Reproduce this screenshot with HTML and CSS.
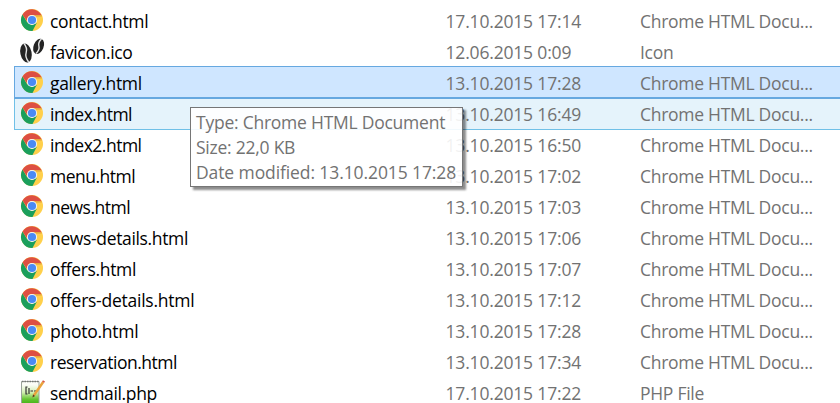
FILE: index.html
```
<!DOCTYPE html>
<html lang="en">
<head>
<meta charset="utf-8">
<title>Files</title>
<link rel="stylesheet" href="styles.css">
</head>
<body>
<svg class="defs" aria-hidden="true">
  <symbol id="chrome" viewBox="0 0 24 24">
    <circle cx="12" cy="12" r="11" fill="#ffd04b"/>
    <path d="M2.500 6.500A11 11 0 0 0 12.500 23l4.300-8.300-4.800 2.300-5-3z" fill="#1b9f5c"/>
    <path d="M2.500 6.500A11 11 0 0 1 21.500 7H12a5 5 0 0 0-4.800 6.400z" fill="#dd4f43"/>
    <path d="M12 7h9.500l.5 1.400-9 .3z" fill="#e9a63c"/>
    <circle cx="12" cy="12" r="5.100" fill="#f4f4f4"/>
    <circle cx="12" cy="12" r="4.100" fill="#4a8af5"/>
  </symbol>
</svg>
<main class="list">
  <div class="row"><svg class="icon"><use href="#chrome"/></svg><span class="name">contact.html</span><span class="date">17.10.2015 17:14</span><span class="type">Chrome HTML Docu...</span></div>
  <div class="row"><svg class="icon beans" viewBox="0 0 24 24">
    <g fill="#242424"><ellipse cx="6" cy="14" rx="5.600" ry="9.600" transform="rotate(-12 6 14)"/><ellipse cx="18.600" cy="7.400" rx="5" ry="8" transform="rotate(22 18.600 7.400)"/></g>
    <path d="M4 4.500q3.600 4.500 2.200 9t2.400 9.500M21.500 0q-3.600 3.400-2.600 7t-2.800 7.500" fill="none" stroke="#e4e4e4" stroke-width="1.400"/>
  </svg><span class="name">favicon.ico</span><span class="date">12.06.2015 0:09</span><span class="type">Icon</span></div>
  <div class="row selected"><svg class="icon"><use href="#chrome"/></svg><span class="name">gallery.html</span><span class="date">13.10.2015 17:28</span><span class="type">Chrome HTML Docu...</span></div>
  <div class="row hover"><svg class="icon"><use href="#chrome"/></svg><span class="name tight">index.html</span><span class="date">13.10.2015 16:49</span><span class="type">Chrome HTML Docu...</span></div>
  <div class="row"><svg class="icon"><use href="#chrome"/></svg><span class="name tight">index2.html</span><span class="date">13.10.2015 16:50</span><span class="type">Chrome HTML Docu...</span></div>
  <div class="row"><svg class="icon"><use href="#chrome"/></svg><span class="name tight">menu.html</span><span class="date">13.10.2015 17:02</span><span class="type">Chrome HTML Docu...</span></div>
  <div class="row"><svg class="icon"><use href="#chrome"/></svg><span class="name tight">news.html</span><span class="date">13.10.2015 17:03</span><span class="type">Chrome HTML Docu...</span></div>
  <div class="row"><svg class="icon"><use href="#chrome"/></svg><span class="name">news-details.html</span><span class="date">13.10.2015 17:06</span><span class="type">Chrome HTML Docu...</span></div>
  <div class="row"><svg class="icon"><use href="#chrome"/></svg><span class="name">offers.html</span><span class="date">13.10.2015 17:07</span><span class="type">Chrome HTML Docu...</span></div>
  <div class="row"><svg class="icon"><use href="#chrome"/></svg><span class="name loose">offers-details.html</span><span class="date">13.10.2015 17:12</span><span class="type">Chrome HTML Docu...</span></div>
  <div class="row"><svg class="icon"><use href="#chrome"/></svg><span class="name loose">photo.html</span><span class="date">13.10.2015 17:28</span><span class="type">Chrome HTML Docu...</span></div>
  <div class="row"><svg class="icon"><use href="#chrome"/></svg><span class="name tight">reservation.html</span><span class="date">13.10.2015 17:34</span><span class="type">Chrome HTML Docu...</span></div>
  <div class="row"><svg class="icon" viewBox="0 0 24 24">
    <defs><linearGradient id="page" x1="0" y1="0" x2="0" y2="1"><stop offset=".15" stop-color="#fbfdf7"/><stop offset=".5" stop-color="#d0edb0"/><stop offset=".8" stop-color="#66c532"/><stop offset="1" stop-color="#48b51b"/></linearGradient></defs>
    <path d="M1.500 1.500H19V23.500H1.500z" fill="url(#page)" stroke="#9aa39a"/>
    <path d="M2 1.500h17" stroke="#777" stroke-width="1.500" stroke-dasharray="1.500 1"/>
    <path d="M7.500 7H6v7h1.500M9 8v6M10.500 11h2.500M14 11h2" fill="none" stroke="#333" stroke-width="1.200"/>
    <path d="M22 1.500l2 1.500-9 13-2.500 1.500.5-3z" fill="#e9a33b"/><path d="M22 1.500l1-1.300 2 1.300-1 1.500z" fill="#d9573f"/><path d="M13 14.500l-.5 3 2.500-1.500z" fill="#4d3a25"/>
  </svg><span class="name">sendmail.php</span><span class="date">17.10.2015 17:22</span><span class="type">PHP File</span></div>
</main>
<aside class="tooltip"><div class="kind">Type: Chrome HTML Document</div><div class="size">Size: 22,0 KB</div><div class="modified">Date modified: 13.10.2015 17:28</div></aside>
</body>
</html>
```

FILE: styles.css
```
* { box-sizing: border-box; }
body {
  margin: 0;
  height: 403px;
  overflow: hidden;
  position: relative;
  background: #fff;
  color: #727272;
  font: 400 17.5px/20px "Open Sans", "Noto Sans", sans-serif;
  white-space: nowrap;
}
.defs { position: absolute; width: 0; height: 0; }
.list { padding: 5px 0 0 14px; }
.row {
  height: 31px;
  display: grid;
  grid-template-columns: 36px 396px 194px 1fr;
  align-items: center;
  padding-top: 1px;
}
.icon { width: 24px; height: 24px; margin-left: 6px; margin-top: -2px; display: block; overflow: visible; }
.name { color: #000; letter-spacing: -.35px; }
.name.tight { letter-spacing: -.5px; }
.name.loose { letter-spacing: -.25px; }
.date { letter-spacing: -.18px; margin-left: -.5px; }
.type { letter-spacing: -.28px; }
.selected, .hover { grid-template-columns: 35px 396px 194px 1fr; }
.selected .icon, .hover .icon { margin-left: 5px; }
.selected {
  background: #cfe6ff;
  border: solid #66a8e0;
  border-width: 1px 0 2px 1px;
  height: 33px;
  margin-top: -1px;
  margin-bottom: -1px;
}
.hover {
  background: #e5f3fb;
  border: solid #70c0e7;
  border-width: 0 0 1px 1px;
  height: 32px;
  margin-bottom: -1px;
  position: relative;
  z-index: -1;
}
.tooltip {
  position: absolute;
  left: 190px;
  top: 107px;
  width: 273px;
  height: 80px;
  padding: 2px 0 0 5px;
  border: 1px solid #767676;
  background: rgba(255, 255, 255, .9);
  box-shadow: 3px 3px 2px rgba(0, 0, 0, .45);
  line-height: 25px;
}
.kind, .size { letter-spacing: -.24px; }
.modified { letter-spacing: -.1px; }
```
